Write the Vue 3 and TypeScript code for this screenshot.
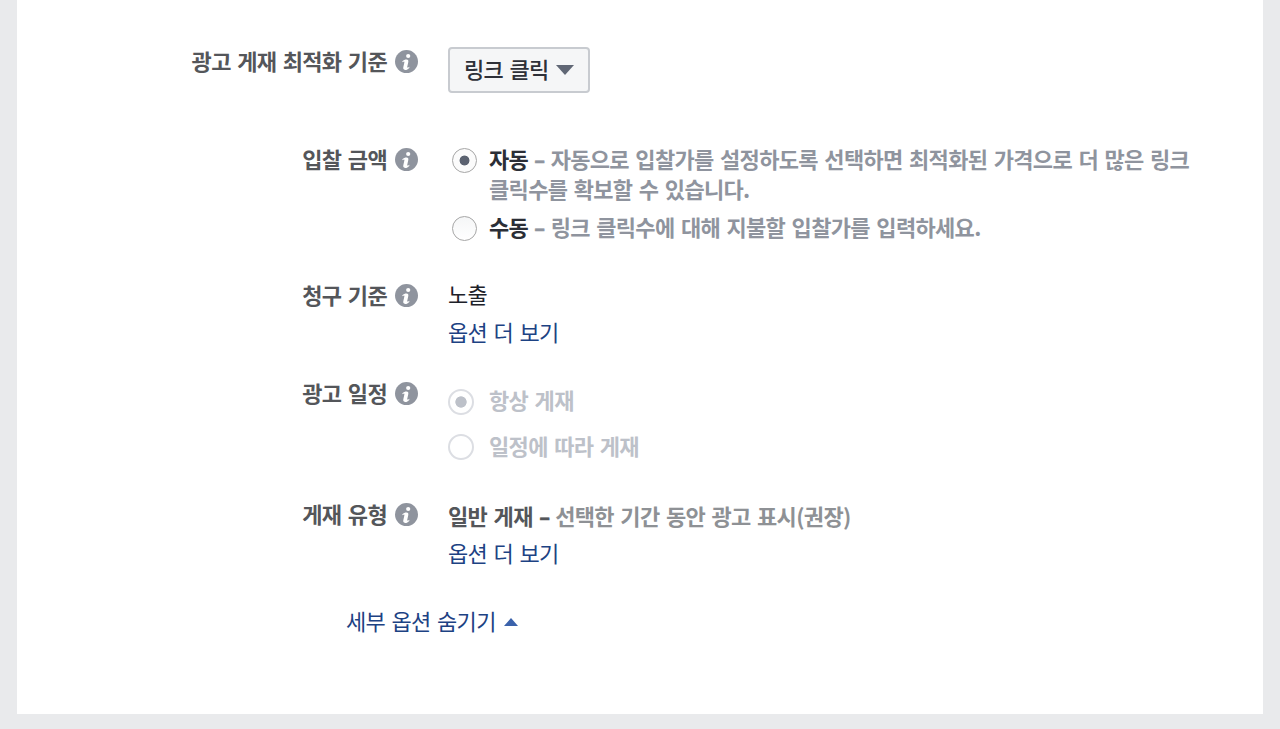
<script setup lang="ts">
interface Row {
  key: string
  label: string
}
const rows: Row[] = [
  { key: 'optimize', label: '광고 게재 최적화 기준' },
  { key: 'bid', label: '입찰 금액' },
  { key: 'charge', label: '청구 기준' },
  { key: 'schedule', label: '광고 일정' },
  { key: 'delivery', label: '게재 유형' },
]
</script>

<template>
  <main class="page">
    <section class="panel">
      <div v-for="row in rows" :key="row.key" class="row" :class="row.key">
        <div class="label">
          <span>{{ row.label }}</span>
          <svg class="info" viewBox="0 0 24 24" aria-hidden="true">
            <circle cx="11.5" cy="11.6" r="11.5" fill="#8f949e" />
            <circle cx="13.2" cy="6" r="2.1" fill="#fff" />
            <path
              d="M7.4 11.2C8.7 9.9 10.3 9.3 11.6 9.4C13.1 9.5 13.6 10.5 13.3 11.9L12.2 17C12 18 13 17.7 14.3 16.7V17.9C13 19.3 11.5 20 10.1 19.9C8.5 19.8 8 18.8 8.3 17.3L9.4 12.2C9.6 11.1 8.8 11.4 7.4 12.2Z"
              fill="#fff"
            />
          </svg>
        </div>

        <div v-if="row.key === 'optimize'" class="content">
          <button class="select" type="button">
            <span>링크 클릭</span>
            <svg class="caret" viewBox="0 0 18 10" aria-hidden="true"><path d="M0 0H18L9 10Z" fill="#606775" /></svg>
          </button>
        </div>

        <div v-else-if="row.key === 'bid'" class="content">
          <div class="choice">
            <i class="radio on"></i>
            <p><b>자동</b><span class="dash">-</span>자동으로 입찰가를 설정하도록 선택하면 최적화된 가격으로 더 많은 링크<br />클릭수를 확보할 수 있습니다.</p>
          </div>
          <div class="choice second">
            <i class="radio"></i>
            <p><b>수동</b><span class="dash">-</span>링크 클릭수에 대해 지불할 입찰가를 입력하세요.</p>
          </div>
        </div>

        <div v-else-if="row.key === 'charge'" class="content">
          <div class="value">노출</div>
          <a class="link">옵션 더 보기</a>
        </div>

        <div v-else-if="row.key === 'schedule'" class="content">
          <div class="choice off"><i class="radio on"></i><p>항상 게재</p></div>
          <div class="choice off"><i class="radio"></i><p>일정에 따라 게재</p></div>
        </div>

        <div v-else class="content">
          <div class="kind"><b>일반 게재<span class="dash">-</span></b>선택한 기간 동안 광고 표시(권장)</div>
          <a class="link">옵션 더 보기</a>
        </div>
      </div>

      <a class="toggle">
        <span>세부 옵션 숨기기</span>
        <svg class="up" viewBox="0 0 14 8" aria-hidden="true"><path d="M0 8L7 0L14 8Z" fill="#3b62ab" /></svg>
      </a>
    </section>
  </main>
</template>

<style>
body {
  background: #e9eaec;
}
</style>

<style scoped>
.page {
  box-sizing: border-box;
  height: 729px;
  padding: 0 17px 15px;
  overflow: hidden;
  background: #e9eaec;
  font-family: "Noto Sans CJK KR", sans-serif;
  font-size: 22px;
  line-height: 30px;
  letter-spacing: -0.67px;
  word-spacing: 2.1px;
  white-space: nowrap;
}
.panel {
  box-sizing: border-box;
  height: 714px;
  padding-top: 45px;
  background: #fff;
}
.row {
  display: grid;
  grid-template-columns: 402px 1fr;
  column-gap: 29px;
  align-items: start;
}
.optimize { height: 98px; }
.bid { height: 136px; }
.charge { height: 98px; }
.schedule { height: 121px; }
.delivery { height: 108px; }
.label {
  display: flex;
  justify-content: flex-end;
  align-items: flex-start;
  gap: 8px;
  color: #54565a;
  font-weight: 700;
}
.info {
  width: 24px;
  height: 24px;
  margin-top: 5px;
}
.select {
  display: flex;
  box-sizing: border-box;
  width: 142px;
  height: 46px;
  margin-top: 2px;
  padding: 0 0 5px 14px;
  align-items: center;
  gap: 7px;
  border: 2px solid #c8cbd0;
  border-radius: 4px;
  background: #f5f6f7;
  color: #2e3038;
  font: inherit;
  font-weight: 500;
  letter-spacing: inherit;
  word-spacing: inherit;
}
.caret {
  width: 18px;
  height: 10px;
  margin-top: 5px;
}
.choice {
  display: flex;
  align-items: flex-start;
  color: #8f949e;
  font-weight: 700;
}
.choice p { margin: 0; }
b { font-weight: 700; }
.choice b { color: #2b2e36; }
.second { margin-top: 8px; }
.radio {
  box-sizing: border-box;
  flex: none;
  width: 25px;
  height: 25px;
  margin: 5px 12px 0 4px;
  border: 1px solid #a6a6a6;
  border-radius: 50%;
  background: linear-gradient(#f5f6f7, #fff);
}
.radio.on {
  background: radial-gradient(circle, #5b6270 0 4.6px, #fbfbfb 5.3px);
}
.dash {
  display: inline-block;
  width: 22.5px;
  text-align: center;
  transform: scaleX(1.45);
  -webkit-text-stroke: 0.5px currentColor;
}
.value {
  margin-top: -1px;
  color: #1d2129;
}
.link,
.toggle { color: #1d4283; }
.link {
  display: block;
  margin-top: 8px;
}
.schedule .content { padding-top: 7px; }
.off {
  height: 45px;
  color: #bdc1c9;
}
.off + .off { padding-top: 1px; }
.off .radio {
  width: 26px;
  height: 26px;
  margin: 5px 15px 0 0;
  border: 2px solid #dcdee3;
  background: #fff;
}
.off + .off .radio { margin-top: 4px; }
.off .radio.on {
  background: radial-gradient(circle, #bdc1c9 0 5.3px, #fff 6px);
}
.kind {
  padding-top: 2px;
  color: #8e9195;
  font-weight: 700;
}
.kind b { color: #54565a; }
.delivery .link { margin-top: 7px; }
.toggle {
  display: flex;
  align-items: center;
  gap: 8px;
  margin: -1px 0 0 329px;
}
.up {
  width: 14px;
  height: 8px;
  margin-top: 4px;
}
</style>
